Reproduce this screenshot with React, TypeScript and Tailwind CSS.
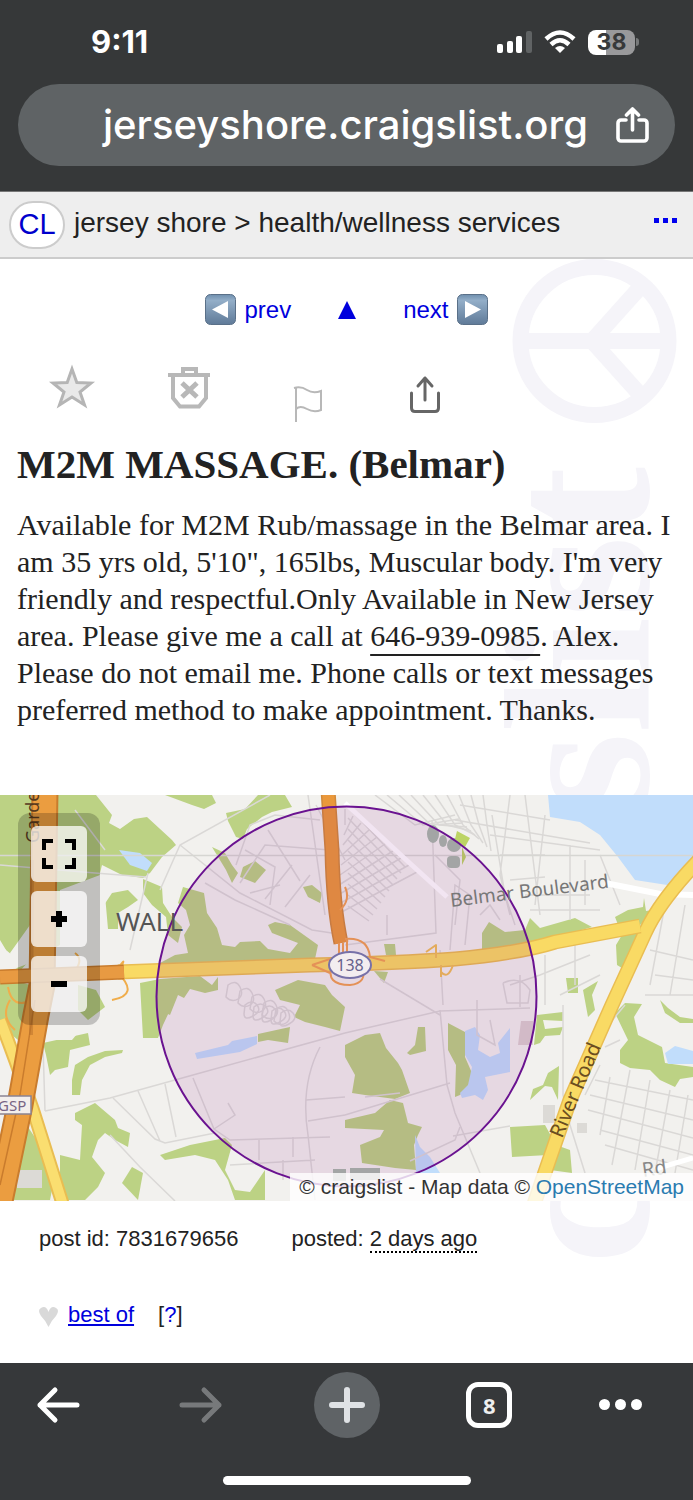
import type { ReactNode } from "react";

const greens = [
  "0,0 96,0 112,20 109,28 120,34 134,24 147,22 172,45 176,50 162,62 150,78 143,83 122,80 102,70 100,78 98,90 62,95 60,150 30,165 18,178 12,160 0,150",
  "165,0 212,0 216,8 204,14 192,10",
  "258,0 285,0 292,12 272,17 262,22 247,34 243,44 236,42 228,26 226,18 245,14",
  "105,100 125,92 138,105 128,112 118,118 118,134 108,134",
  "143,84 162,92 163,108 172,122 182,132 178,148 168,140 166,122 152,110 143,98",
  "183,92 204,98 207,118 217,133 222,150 235,152 240,147 260,146 268,154 290,158 298,148 272,138 268,130 275,127 290,130 318,150 315,164 200,173 160,168 175,160 188,158 184,140 190,130 186,115 178,108",
  "212,52 225,58 232,70 238,78 232,88 226,75",
  "243,72 255,66 266,75 255,88 240,82",
  "303,92 312,90 322,98 320,108 308,102",
  "160,184 200,181 212,190 218,182 218,195 205,198 190,194 184,203 178,200 170,220 160,215",
  "275,195 298,185 325,190 332,200 345,212 340,236 325,232 305,227 294,222 300,210 280,205",
  "258,239 290,232 288,248 268,245 258,247",
  "345,250 365,240 380,238 386,253 398,268 402,275 410,298 395,304 365,300 352,298 355,280 345,262",
  "345,325 375,318 390,305 403,308 408,328 422,332 418,340 414,350 416,375 395,373 362,368 360,350 380,342 384,335 345,333",
  "448,228 465,237 465,262 472,278 468,292 460,300 455,302 456,270 448,255",
  "407,258 415,250 418,232 425,232 426,256 410,260",
  "482,138 489,127 505,137 525,135 530,123 540,133 575,123 592,132 575,137 530,150 482,155",
  "384,149 395,149 396,160 386,160",
  "374,176 388,177 384,188",
  "615,122 628,115 643,112 644,103 646,116 660,114 640,130 650,140 640,155 630,178 617,170 616,150 622,140",
  "566,183 578,183 578,198 568,198",
  "583,195 598,186 592,200 595,215 588,222",
  "537,220 563,217 563,226 543,225 545,234 563,232 560,240 545,241 540,248 534,250",
  "530,305 533,294 543,290 548,278 559,271 558,305 552,292 545,291",
  "510,332 545,330 556,350 570,355 572,378 550,375 548,360 512,362",
  "615,218 625,208 642,209 634,222 638,240 662,252 665,268 693,272 693,282 680,284 675,292 660,285 650,275 630,273 620,268 620,255 628,245",
  "660,205 668,213 680,222 693,224 693,228 680,228 665,218",
  "43,248 88,238 90,250 70,255 68,272 55,275 50,280 46,260",
  "72,285 75,270 88,262 105,256 123,255 122,258 105,262 90,270 82,285 80,300 72,300",
  "140,188 160,184 163,205 170,215 163,230 158,243 143,243",
  "75,318 95,308 115,325 118,333 130,338 128,352 115,345 105,338 98,345 92,362 105,378 98,392 85,405 60,405 60,360 80,365 82,330 75,325",
  "160,360 190,350 225,343 232,350 225,375 235,395 250,397 265,375 265,405 235,405 228,385 215,365 195,360 165,365",
  "132,372 143,378 138,405 122,388",
  "0,180 30,190 32,205 18,245 0,230",
  "20,320 40,350 52,395 50,405 0,405 0,395 15,390",
  "78,190 96,195 105,212 88,225 78,215",
];

const waters = [
  "119,55 140,58 152,68 147,76 130,70",
  "195,258 228,250 232,246 257,241 257,249 240,257 197,264",
  "548,0 693,0 693,75 680,92 635,85 618,62 600,40 580,27 550,22",
  "465,236 475,232 480,240 478,255 490,262 500,258 498,248 510,233 510,277 485,282 488,295 483,305 475,300 462,303 460,298 468,290 472,272 465,260",
  "415,340 420,352 430,362 440,378 416,378",
  "665,258 675,251 693,256 693,269 668,269",
];

const streets = [
  "M45 316L110 303L193 280L345 238L440 216L530 213",
  "M43 250L45 316M113 303L155 344L165 348L215 338M138 296L160 346M165 289L176 342M193 283L214 334L230 345L330 342",
  "M320 252Q300 290 308 340L315 405M259 345V365M293 342V362M230 370L315 365M283 365V385",
  "M306 305L345 302M308 326L345 320M214 334L235 320L228 308",
  "M160 95L180 50L270 0M180 50L240 98L312 135L345 140M205 88L235 105L290 130M236 70L250 30L275 20L320 25",
  "M110 340L140 372L175 406M0 70L95 78L146 82M75 15L105 55M148 78L130 155",
  "M240 88L265 50L330 55M245 55L275 72L270 110M250 98L280 90M265 104L292 70M285 112L310 80M268 35L300 86",
  "M308 0L325 120M316 10L345 65",
  "M345 150L436 138L432 25M387 120V140M380 184L440 220M440 155L443 210M440 215L447 290L455 318L480 378",
  "M345 320L450 288M365 302L400 298M410 366L455 345L460 332M453 341L510 331",
  "M492 20L505 100L515 130M510 0L505 40L500 80L510 120M525 0L540 120M545 20L535 110",
  "M460 10L550 25M455 25L590 48M490 40L600 55M500 60L545 60M510 85L545 82M570 50V125M585 65V110M600 60L620 110M525 100H590M530 115H600",
  "M563 210V300L570 330L585 378M560 200L600 180M510 190L540 180L590 160M545 160V210M575 150V190M520 180V212M503 188Q520 180 530 195L528 208H507L503 188",
  "M600 270L585 300M595 285L693 305M590 300L693 325M588 315L693 343M600 335L693 360M605 350L693 375M610 282L600 340M630 275L612 370M650 285L635 375M670 295L655 378M688 300L675 378",
  "M600 240L625 210M605 252L620 245M650 155L693 165M655 180L693 185M665 110L650 190M685 110L670 200M645 200H693",
  "M435 60L460 85L455 130M450 155L455 90L470 100L465 150M480 120L490 110L500 125M477 205V240L495 250L490 225",
];

// diagonal town blocks north of the highway
const blocks = [0, 1, 2, 3, 4, 5, 6, 7, 8, 9];

const serif = "font-['Liberation_Serif',serif]";
const sans = "font-['Liberation_Sans',sans-serif]";

function StatusBar() {
  return (
    <div className="flex h-[84px] items-center justify-between pr-[54px] pl-[91px] text-white">
      <span className="font-['Inter',sans-serif] text-[31px] leading-8 font-bold">9:11</span>
      <div className="flex items-center gap-3">
        <svg width="36" height="24" viewBox="0 0 36 24" fill="#fff" aria-hidden="true">
          <rect x="1" y="14" width="6" height="9" rx="2" />
          <rect x="11" y="11" width="6" height="12" rx="2" />
          <rect x="20" y="6" width="6" height="17" rx="2" />
          <rect x="30" y="1" width="6" height="22" rx="2" fill="#606364" />
        </svg>
        <svg width="32" height="24" viewBox="0 0 32 24" fill="none" stroke="#fff" aria-hidden="true">
          <path d="M2 9Q16-4 30 9" strokeWidth="4.5" />
          <path d="M7 14.500Q16 6 25 14.500" strokeWidth="4.5" />
          <path d="M11 18Q16 14 21 18L16 23Z" fill="#fff" stroke="none" />
        </svg>
        <div className="flex items-center gap-px">
          <span className="flex h-[25px] w-[47px] items-center justify-center rounded-lg bg-linear-to-r from-white from-38% to-[#99999b] to-38% font-['Inter',sans-serif] text-[23px] leading-6 font-bold text-[#37393a]">
            38
          </span>
          <span className="h-2 w-[3px] rounded-r-full bg-[#77797a]" />
        </div>
      </div>
    </div>
  );
}

function AddressBar() {
  return (
    <div className="px-[18px] pb-[25px]">
      <div className="flex h-[82px] items-center justify-end gap-7 rounded-full bg-[#5f6365] pr-[26px] text-white">
        <span className="font-['Inter',sans-serif] text-[40px] leading-[48px] font-medium">jerseyshore.craigslist.org</span>
        <button aria-label="Share">
          <svg width="33" height="36" viewBox="0 0 33 36" fill="none" stroke="#fff" strokeWidth="3.6" strokeLinecap="round" strokeLinejoin="round">
            <path d="M10 13H5a3 3 0 0 0-3 3v15a3 3 0 0 0 3 3h23a3 3 0 0 0 3-3V16a3 3 0 0 0-3-3h-5M16.500 23V3M10.500 8l6-6 6 6" />
          </svg>
        </button>
      </div>
    </div>
  );
}

function SiteHeader() {
  return (
    <header className="flex h-[68px] items-center border-t border-b-2 border-t-[#777] border-b-[#ccc] bg-[#eee] pr-4 pl-[9px] text-[#222]">
      <a href="#home" className="flex h-12 w-14 items-center justify-center rounded-full border-2 border-[#ccc] bg-white text-[29px] text-[#0000cc]">
        CL
      </a>
      <nav className="ml-[9px] flex-1 pb-1 text-[28px] leading-8">
        <a href="#area">jersey shore</a> &gt; <a href="#section">health/wellness services</a>
      </nav>
      <button aria-label="Menu" className="flex gap-1 pb-2">
        <span className="size-[5px] bg-[#0000ee]" />
        <span className="size-[5px] bg-[#0000ee]" />
        <span className="size-[5px] bg-[#0000ee]" />
      </button>
    </header>
  );
}

function Watermark() {
  return (
    <svg className="absolute top-0 right-0 -z-10" width="190" height="1010" viewBox="503 259 190 1010" aria-hidden="true">
      <g fill="none" stroke="#f5f4f9" strokeWidth="16">
        <circle cx="594.500" cy="341" r="74" />
        <path d="M521 341H668M592 341L644 283M592 341L644 399" />
      </g>
      <text transform="translate(648 1264) rotate(-90)" fontSize="208" fontWeight="700" fill="#f5f4f9" className={serif}>
        craigslist
      </text>
    </svg>
  );
}

function ArrowTile({ next = false }: { next?: boolean }) {
  return (
    <svg width="31" height="31" viewBox="0 0 31 31" aria-hidden="true">
      <defs>
        <linearGradient id="tile" x1="0" y1="0" x2="0" y2="1">
          <stop offset="0" stopColor="#6f8fae" />
          <stop offset=".2" stopColor="#93aec8" />
          <stop offset="1" stopColor="#5f7a98" />
        </linearGradient>
      </defs>
      <rect x=".5" y=".5" width="30" height="30" rx="5" fill="url(#tile)" stroke="#5a7088" />
      <path d={next ? "M8 7L24 15.500L8 24Z" : "M23 7L7 15.500L23 24Z"} fill="#fff" />
    </svg>
  );
}

function ToolButton({ label, children }: { label: string; children: ReactNode }) {
  return (
    <button aria-label={label} className="flex justify-center">
      <svg width="64" height="64" viewBox="0 0 64 64" fill="none">
        {children}
      </svg>
    </button>
  );
}

function Tools() {
  return (
    <div className="grid w-[472px] grid-cols-4">
      <ToolButton label="Favorite">
        <path d="M33 9L37.800 22.500L52 23L41 32L45.500 45L33 37L20.500 45L25 32L14 23L28.200 22.500Z" fill="#e9e9e9" stroke="#b5b5b5" strokeWidth="3" />
      </ToolButton>
      <ToolButton label="Hide">
        <g stroke="#b8b8b8" strokeWidth="4">
          <path d="M11 15H53M26 14V9H39V14M16 15V38L23 46.500H42L49 38V15" />
          <path d="M25 23L40 37M40 23L25 37" strokeWidth="5" />
        </g>
      </ToolButton>
      <ToolButton label="Flag">
        <path d="M21 28V62M19 28Q26 26 32 30T46 31V50Q39 53 32 49T21 49" stroke="#b8b8b8" strokeWidth="2" />
      </ToolButton>
      <ToolButton label="Share">
        <path d="M18.500 33V48Q18.500 51.500 22 51.500H42Q45.500 51.500 45.500 48V33M32 40V18M25 26L32 18L39 26" stroke="#666" strokeWidth="3" strokeLinecap="round" strokeLinejoin="round" />
      </ToolButton>
    </div>
  );
}

function MapDrawing() {
  return (
    <svg className="size-full" viewBox="0 0 693 406" preserveAspectRatio="xMidYMid slice" fill="none" aria-hidden="true">
      <rect width="693" height="406" fill="#f2f1ee" />
      {greens.map((points) => (
        <polygon key={points} points={points} fill="#bcd284" />
      ))}
      {waters.map((points) => (
        <polygon key={points} points={points} fill="#c1ddfb" />
      ))}
      <g fill="#f2f1ee">
        <path d="M100 80L133 83L128 95L112 98L104 110L98 140L60 155V95Z" />
        <path d="M48 245L75 220L88 226L72 245Z" />
        <path d="M0 145L6 155L5 172L0 176ZM10 158L30 130V168L14 174Z" />
      </g>
      <g stroke="#dad8d6" strokeWidth="1.500">
        {streets.map((d) => (
          <path key={d} d={d} />
        ))}
        {blocks.map((n) => (
          <path key={n} d={`M${345 + n * 8} ${14 + n * 7}L${345 - n} ${30 + n * 10}M${348} ${12 + n * 11}L${405 - n * 4} ${72 + n * 6}`} />
        ))}
        {blocks.map((n) => (
          <path key={n} d={`M${375 + n * 12} 0L${415 + n * 8} 30L${455 + n * 4} ${20 + n * 4}`} />
        ))}
        {[0, 1, 2, 3, 4].map((n) => (
          <path key={n} d={`M${228 + n * 12} ${190 + n * 6}q8 -6 12 2t-2 12t-12 -2zM${245 + n * 9} ${210 + n * 2}q7 -6 12 0t-4 11t-9 -2z`} />
        ))}
      </g>
      <path d="M0 60.500H693" stroke="#d6d6d2" strokeWidth="1.500" />
      <path d="M345 8L403 62L447 102" stroke="#fff" strokeWidth="5" />
      <path d="M605 88L660 99L693 100" stroke="#fff" strokeWidth="6" />
      <path d="M655 374L693 363" stroke="#fff" strokeWidth="5" />
      <g fill="#a8b8aa">
        <ellipse cx="433" cy="39" rx="6" ry="9" />
        <ellipse cx="443" cy="46" rx="4" ry="6" />
        <circle cx="454" cy="50" r="7" />
        <rect x="447" y="61" width="13" height="12" rx="4" />
        <rect x="333" y="374" width="13" height="12" />
        <path d="M350 373H380V385H350Z" />
      </g>
      <path d="M457 36L470 43L465 52L455 44ZM462 52L466 62L462 70Z" fill="#bcd464" />
      <path d="M543 310H555V328H543ZM577 328H587V338H577ZM17 375H42V393H17Z" fill="#dcdad6" />
      <path d="M521 226H533V250H518Z" fill="#dcd0d0" />

      {/* highways */}
      <g strokeLinejoin="round">
        <path d="M0 225Q10 250 33 315L63 410" stroke="#e9bd52" strokeWidth="14" />
        <path d="M0 225Q10 250 33 315L63 410" stroke="#fade70" strokeWidth="10" />
        <path d="M10 205Q0 222 15 235M75 158Q85 165 72 180M115 178Q130 155 118 178Q140 200 112 205M8 192Q12 215 32 205" stroke="#f0ad4b" strokeWidth="2" />
        <path d="M45 -5L44 60L42 190L36 220L20 310L0 406" stroke="#c97c2d" strokeWidth="27" />
        <path d="M45 -5L44 60L42 190L36 220L20 310L0 406" stroke="#eb9d40" strokeWidth="23" />
        <path d="M35 205L20 300L0 390" stroke="#c97c2d" strokeWidth="1.500" />
        <path d="M32 65L31 240" stroke="#b76f2a" strokeWidth="4" opacity=".5" />
        <path d="M702 62Q660 105 645 138L612 210L570 305L533 412" stroke="#e9bd52" strokeWidth="15" />
        <path d="M702 62Q660 105 645 138L612 210L570 305L533 412" stroke="#f9da64" strokeWidth="12" />
        <path d="M118 177L310 170Q400 168 455 164Q520 158 555 147L640 131" stroke="#e9bd52" strokeWidth="15" />
        <path d="M118 177L310 170Q400 168 455 164Q520 158 555 147L640 131" stroke="#f9da64" strokeWidth="12" />
        <path d="M0 182L124 177" stroke="#c97c2d" strokeWidth="15" />
        <path d="M0 182L124 177" stroke="#e89a42" strokeWidth="12" />
        <path d="M328 -5L332 55Q333 110 341 148" stroke="#d08a3c" strokeWidth="15" />
        <path d="M328 -5L332 55Q333 110 341 148" stroke="#ea983b" strokeWidth="12" />
        <g stroke="#f0a253" strokeWidth="2">
          <path d="M345 92Q351 105 340 115M339 148V162M343 148V162M347 145V164M312 170L330 164M312 170L330 178" />
          <path d="M332 170Q325 190 350 190Q368 188 362 172M345 144Q368 142 370 162L385 166" />
          <path d="M426 157L436 150V163M441 177Q448 185 453 170M441 170V182" stroke="#efbf59" />
        </g>
      </g>

      <circle cx="346.500" cy="201.500" r="190" fill="#800080" fillOpacity=".1" stroke="#6a1290" strokeWidth="2" />

      <ellipse cx="350" cy="170" rx="21" ry="13" fill="#f3edf0" stroke="#7771a8" strokeWidth="2" />
      <g className="font-['Noto_Sans',sans-serif]" fill="#555">
        <text x="350" y="176" fontSize="16" textAnchor="middle" fill="#66618c">138</text>
        <text x="116" y="136" fontSize="26">WALL</text>
        <text transform="translate(451 112) rotate(-7)" fontSize="19" fill="#777">Belmar Boulevard</text>
        <text transform="translate(562 344) rotate(-67)" fontSize="20" fill="#6b4d20">River Road</text>
        <text transform="translate(39 48) rotate(-90)" fontSize="18" fill="#57391d">Garde</text>
        <text transform="translate(643 382) rotate(-8)" fontSize="20" fill="#888">Rd</text>
        <rect x="-8" y="301" width="39" height="18" fill="#f3efec" stroke="#8b8492" strokeWidth="1.500" />
        <text x="-2" y="316" fontSize="15" fill="#786584">GSP</text>
      </g>
    </svg>
  );
}

const mapButton = "flex h-14 w-14 items-center justify-center rounded-md bg-[#ffffffbf]";

function PostMap() {
  return (
    <div className="relative h-[406px] overflow-hidden bg-[#f2f1ee]">
      <MapDrawing />
      <div className="absolute top-[18px] left-[18px] flex flex-col gap-[9px] rounded-xl bg-[#0003] p-[13px]">
        <button aria-label="Full screen" className={mapButton}>
          <svg width="34" height="30" viewBox="0 0 34 30" fill="none" stroke="#000" strokeWidth="4">
            <path d="M2 11V2H11M23 2H32V11M32 19V28H23M11 28H2V19" />
          </svg>
        </button>
        <button aria-label="Zoom in" className={mapButton}>
          <svg width="18" height="18" viewBox="0 0 18 18" stroke="#000" strokeWidth="6">
            <path d="M9 1V17M1 9H17" />
          </svg>
        </button>
        <button aria-label="Zoom out" className={mapButton}>
          <svg width="18" height="18" viewBox="0 0 18 18" stroke="#000" strokeWidth="6">
            <path d="M1 9H17" />
          </svg>
        </button>
      </div>
      <p className="absolute right-0 bottom-0 bg-[#fffc] px-[9px] text-[21px] leading-7 text-[#333]">
        © craigslist - Map data ©{" "}
        <a href="#osm" className="text-[#2a7bb0]">
          OpenStreetMap
        </a>
      </p>
    </div>
  );
}

function BottomBar() {
  return (
    <footer className="bg-[#36383a] pb-[15px]">
      <div className="flex h-[83px] items-center justify-between px-9">
        <button aria-label="Back">
          <svg width="46" height="38" viewBox="0 0 46 38" fill="none" stroke="#fff" strokeWidth="5" strokeLinecap="round" strokeLinejoin="round">
            <path d="M41 19H4M19 4L4 19L19 34" />
          </svg>
        </button>
        <button aria-label="Forward" className="ml-2">
          <svg width="46" height="38" viewBox="0 0 46 38" fill="none" stroke="#77797b" strokeWidth="5" strokeLinecap="round" strokeLinejoin="round">
            <path d="M5 19H42M27 4L42 19L27 34" />
          </svg>
        </button>
        <button aria-label="New tab" className="ml-1 flex size-[66px] items-center justify-center rounded-full bg-[#5f6366]">
          <svg width="36" height="36" viewBox="0 0 36 36" stroke="#dfe2e5" strokeWidth="6" strokeLinecap="round">
            <path d="M18 3V33M3 18H33" />
          </svg>
        </button>
        <button aria-label="Tabs" className="flex h-[46px] w-[46px] items-center justify-center rounded-xl border-[5px] border-white font-['Noto_Sans',sans-serif] text-[22px] leading-6 font-bold text-[#eee]">
          8
        </button>
        <button aria-label="More" className="mr-[15px] flex gap-[5px]">
          <span className="size-[11px] rounded-full bg-white" />
          <span className="size-[11px] rounded-full bg-white" />
          <span className="size-[11px] rounded-full bg-white" />
        </button>
      </div>
      <div className="mx-auto mt-[30px] h-[9px] w-[248px] rounded-full bg-white" />
    </footer>
  );
}

export default function App() {
  return (
    <div className={`flex min-h-screen flex-col bg-white ${sans}`}>
      <div className="bg-[#363839]">
        <StatusBar />
        <AddressBar />
      </div>
      <SiteHeader />

      <main className="relative isolate flex-1 text-[#222]">
        <Watermark />
        <nav className="flex h-[101px] items-center justify-center text-[24px] leading-8 text-[#0000dd]">
          <a href="#prev" className="flex items-center gap-2">
            <ArrowTile />
            prev
          </a>
          <a href="#top" aria-label="Back to list" className="mx-[47px]">
            <svg width="18" height="18" viewBox="0 0 18 18" fill="currentColor">
              <path d="M9 0L18 18H0Z" />
            </svg>
          </a>
          <a href="#next" className="flex items-center gap-2">
            next
            <ArrowTile next />
          </a>
        </nav>
        <div className="px-3">
          <Tools />
        </div>
        <h1 className={`px-[17px] pt-4 text-[41px] leading-12 font-bold ${serif}`}>M2M MASSAGE. (Belmar)</h1>
        <section className={`px-[17px] pt-[18px] pb-[67px] text-[30px] leading-[37px] ${serif}`}>
          Available for M2M Rub/massage in the Belmar area. I am 35 yrs old, 5'10", 165lbs, Muscular body. I'm very
          friendly and respectful.Only Available in New Jersey area. Please give me a call at{" "}
          <a href="tel:646-939-0985" className="underline decoration-2 underline-offset-8">
            646-939-0985
          </a>
          . Alex. Please do not email me. Phone calls or text messages preferred method to make appointment. Thanks.
        </section>

        <PostMap />

        <div className="px-[39px] text-[22px] leading-7">
          <div className="flex gap-[53px] pt-6">
            <p>post id: 7831679656</p>
            <p>
              posted: <time className="border-b-2 border-dotted border-black">2 days ago</time>
            </p>
          </div>
          <div className="flex items-center pt-12 pb-[34px]">
            <svg width="19" height="20" viewBox="0 0 19 20" fill="#d9d9d9" className="mt-1" aria-hidden="true">
              <path d="M9.500 20Q7 14 2 9Q-2 3 2 1Q7-2 9.500 5Q12-2 17 1Q21 3 17 9Q12 14 9.500 20Z" />
            </svg>
            <a href="#best" className="ml-[10px] text-[#0000dd] underline decoration-2 underline-offset-2">
              best of
            </a>
            <span className="ml-6">
              [
              <a href="#about" className="text-[#0000dd]">
                ?
              </a>
              ]
            </span>
          </div>
        </div>
      </main>
      <BottomBar />
    </div>
  );
}
